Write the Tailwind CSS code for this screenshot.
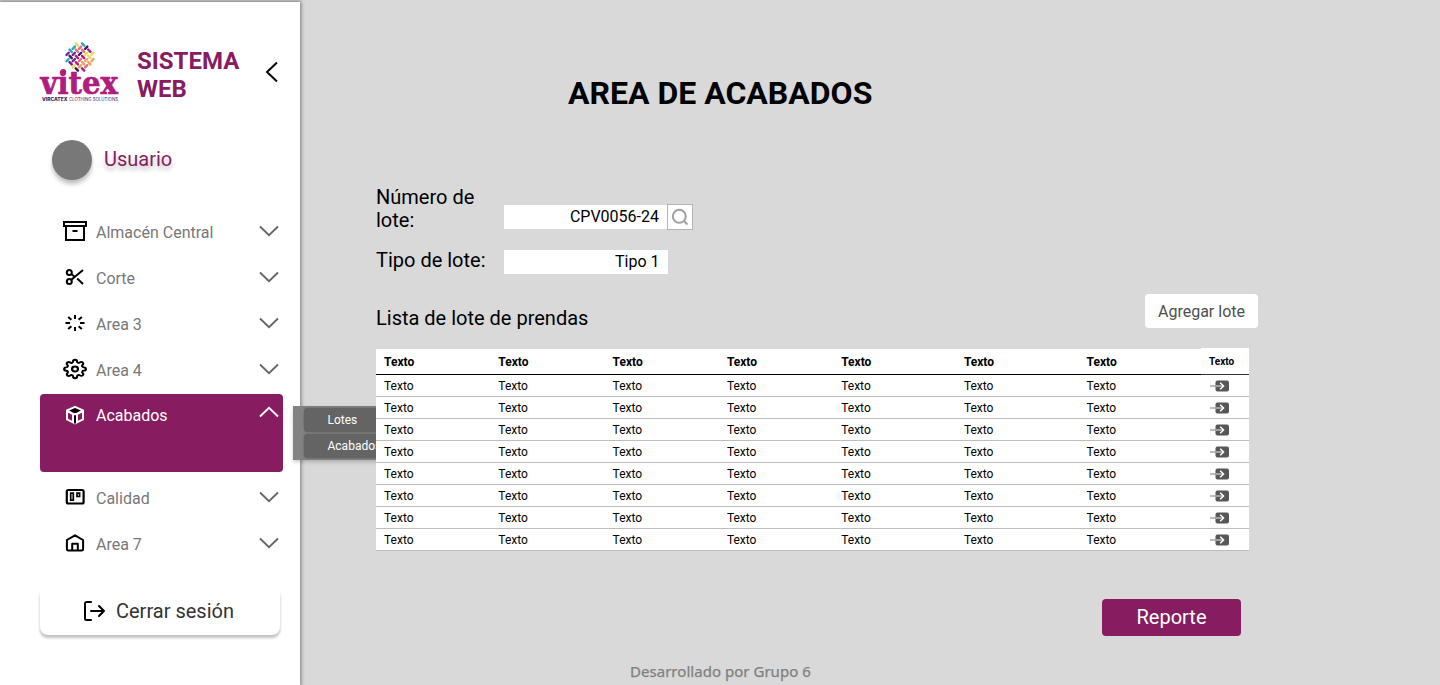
<!DOCTYPE html>
<html lang="es">
<head>
<meta charset="utf-8">
<title>Area de Acabados</title>
<script src="https://cdn.jsdelivr.net/npm/@tailwindcss/browser@4"></script>
</head>
<body class="bg-[#d9d9d9] font-['Roboto',sans-serif] text-black">
<svg class="hidden">
  <symbol id="down" viewBox="0 0 20 12"><path d="M1 1.500l9 8.600 9-8.600" fill="none" stroke="currentColor" stroke-width="1.900"/></symbol>
  <symbol id="enter" viewBox="0 0 20 12"><rect x="5.500" y=".5" width="13.500" height="11" rx="2" fill="#575757"/><path d="M0 6h6" stroke="#999" stroke-width="1.300"/><path d="M6 6h7" stroke="#ccc" stroke-width="1.300"/><path d="M10.200 2.800L13.500 6l-3.300 3.200" fill="none" stroke="#fff" stroke-width="1.500"/></symbol>
</svg>
<div class="relative flex h-[685px] w-[1440px] overflow-hidden">
  <aside class="mt-[2px] flex h-[683px] w-[300px] shrink-0 flex-col bg-white pl-10 shadow-[0_0_4px_1px_rgba(0,0,0,0.45)]">
    <div class="flex h-[106px] items-start pt-[38px]">
      <svg class="h-[64px] w-[80px] overflow-visible" viewBox="0 0 80 64">
        <g id="weave" transform="translate(40 17) rotate(45)" fill="none" stroke-width="2.400" stroke-linecap="round"></g>
        <text x="0.500" y="53.700" textLength="77.300" lengthAdjust="spacingAndGlyphs" font-family="DejaVu Serif" font-weight="700" font-size="32" fill="#b01c80" stroke="#b01c80" stroke-width=".7">vitex</text>
        <circle cx="23.300" cy="32" r="2.900" fill="#b01c80"/>
        <text x="2" y="60.700" textLength="25.500" lengthAdjust="spacingAndGlyphs" font-family="Inter" font-weight="800" font-size="4.400" fill="#3b1a5a">VIRCATEX</text>
        <text x="29" y="60.700" textLength="49" lengthAdjust="spacingAndGlyphs" font-family="Inter" font-size="4.400" fill="#3b1a5a">CLOTHING SOLUTIONS</text>
      </svg>
      <h2 class="ml-[17px] mt-[7px] w-[110px] text-2xl leading-7 font-bold text-[#871c61]">SISTEMA WEB</h2>
      <svg class="ml-[18px] mt-[21px] h-[22px] w-[14px]" viewBox="0 0 14 22"><path d="M12 1.500L2 11l10 9.500" fill="none" stroke="#000" stroke-width="2"/></svg>
    </div>
    <div class="mt-[31.500px] flex h-10 items-center pl-3">
      <div class="size-10 rounded-full bg-[#787878] shadow-[0_4px_4px_rgba(0,0,0,0.25)]"></div>
      <span class="-mt-[2px] ml-3 text-xl text-[#871c61] [text-shadow:0_4px_4px_rgba(0,0,0,0.25)]">Usuario</span>
    </div>
    <nav class="mt-[28.500px] flex w-[243px] flex-col text-base text-[#787878]">
      <a class="flex h-[46px] items-center pl-[23px] pr-1"><svg class="size-6 text-black" viewBox="0 0 24 24" fill="none" stroke="currentColor" stroke-width="2"><path d="M1 3h22v4H1zM3 7V21h18V7M9.500 12h5"/></svg><span class="ml-[9px] mt-[3px] grow">Almacén Central</span><svg class="h-3 w-5 text-[#666]"><use href="#down"/></svg></a>
      <a class="flex h-[46px] items-center pl-[23px] pr-1"><svg class="size-6 text-black" viewBox="0 0 24 24" fill="none" stroke="currentColor" stroke-width="2"><circle cx="6.300" cy="7.400" r="2.500"/><circle cx="6.300" cy="16.500" r="2.500"/><path d="M20 5L8.300 14.800M14.200 13.500l5.800 5.500M8.300 9L12 12"/></svg><span class="ml-[9px] mt-[3px] grow">Corte</span><svg class="h-3 w-5 text-[#666]"><use href="#down"/></svg></a>
      <a class="flex h-[46px] items-center pl-[23px] pr-1"><svg class="size-6 text-black" viewBox="0 0 24 24" fill="none" stroke="currentColor" stroke-width="2"><path d="M12 4v4M12 16v4M2.500 12H7M17 12h4.500M5.200 6l3.200 2.800M15.600 15.200l3.200 2.800M5.200 18l3.200-2.800M15.600 8.800l3.200-2.800"/></svg><span class="ml-[9px] mt-[3px] grow">Area 3</span><svg class="h-3 w-5 text-[#666]"><use href="#down"/></svg></a>
      <a class="flex h-[46px] items-center pl-[23px] pr-1"><svg class="size-6 text-black" viewBox="0 0 24 24" fill="none" stroke="currentColor" stroke-width="2.200" stroke-linejoin="round"><g transform="translate(.2 1.900) scale(.985 .84)"><circle cx="12" cy="12" r="3"/><path d="M19.400 15a1.650 1.650 0 0 0 .33 1.820l.06.06a2 2 0 0 1 0 2.830 2 2 0 0 1-2.830 0l-.06-.06a1.650 1.650 0 0 0-1.820-.33 1.650 1.650 0 0 0-1 1.510V21a2 2 0 0 1-4 0v-.09A1.650 1.650 0 0 0 9 19.400a1.650 1.650 0 0 0-1.820.33l-.06.06a2 2 0 0 1-2.830 0 2 2 0 0 1 0-2.830l.06-.06a1.650 1.650 0 0 0 .33-1.820 1.650 1.650 0 0 0-1.510-1H3a2 2 0 0 1 0-4h.09A1.650 1.650 0 0 0 4.600 9a1.650 1.650 0 0 0-.33-1.820l-.06-.06a2 2 0 0 1 0-2.830 2 2 0 0 1 2.830 0l.06.06a1.650 1.650 0 0 0 1.820.33H9a1.650 1.650 0 0 0 1-1.510V3a2 2 0 0 1 4 0v.09a1.650 1.650 0 0 0 1 1.510 1.650 1.650 0 0 0 1.820-.33l.06-.06a2 2 0 0 1 2.830 0 2 2 0 0 1 0 2.830l-.06.06a1.650 1.650 0 0 0-.33 1.820V9a1.650 1.650 0 0 0 1.510 1H21a2 2 0 0 1 0 4h-.09a1.650 1.650 0 0 0-1.510 1z"/></g></svg><span class="ml-[9px] mt-[3px] grow">Area 4</span><svg class="h-3 w-5 text-[#666]"><use href="#down"/></svg></a>
      <a class="mt-[2px] flex h-[78px] items-start rounded bg-[#871c61] pl-[23px] pr-1 text-white"><svg class="mt-[9px] size-6" viewBox="0 0 24 24" fill="none" stroke="#fff" stroke-width="2" stroke-linejoin="round"><path d="M12 5.500l5 2-5 2-5-2z" fill="#000" stroke="#000" stroke-width="1"/><path d="M12 3.800l8 3.600v9l-8 4-8-4v-9zM4.500 8l5.500 3v8.500M19.500 8L14 11v8.500M10 11h4"/><path d="M12 13v7.500" stroke="#000"/></svg><span class="ml-[9px] mt-[10px] grow">Acabados</span><svg class="mt-3 h-3 w-5 rotate-180"><use href="#down"/></svg></a>
      <a class="mt-[2px] flex h-[46px] items-center pl-[23px] pr-1"><svg class="size-6 text-black" viewBox="0 0 24 24" fill="none" stroke="currentColor" stroke-width="2"><rect x="3.800" y="5" width="16.800" height="13.500" rx="1.500" stroke-width="2.200"/><path d="M7.700 8.200h2.600v7H7.700zM14 8.200h2.600v3.300H14z" stroke-width="1.700"/></svg><span class="ml-[9px] mt-[3px] grow">Calidad</span><svg class="h-3 w-5 text-[#666]"><use href="#down"/></svg></a>
      <a class="flex h-[46px] items-center pl-[23px] pr-1"><svg class="size-6 text-black" viewBox="0 0 24 24" fill="none" stroke="currentColor" stroke-width="2" stroke-linejoin="round"><path d="M3.900 9L12 4.300 20.100 9v9a1.300 1.300 0 0 1-1.300 1.500H5.200A1.300 1.300 0 0 1 3.900 18zM9.200 19.500v-6.700h5.600v6.700"/></svg><span class="ml-[9px] mt-[3px] grow">Area 7</span><svg class="h-3 w-5 text-[#666]"><use href="#down"/></svg></a>
    </nav>
    <button class="mt-[21px] flex h-12 w-60 items-center rounded-lg bg-white pl-[42px] text-xl text-[#333] shadow-[0_3px_3px_rgba(0,0,0,0.25)]">
      <svg class="h-6 w-6" viewBox="0 0 24 24" fill="none" stroke="#000" stroke-width="2" stroke-linecap="round" stroke-linejoin="round"><path d="M9 3H4.500A1.500 1.500 0 0 0 3 4.500v15A1.500 1.500 0 0 0 4.500 21H9M9 12h13M17 7l5 5-5 5"/></svg>
      <span class="ml-[10px]">Cerrar sesión</span>
    </button>
  </aside>

  <div class="absolute left-[293px] top-[406px] flex h-[54px] w-[120px] flex-col gap-[2px] bg-[#828282] py-[2px] pl-[10.500px] text-xs text-white shadow-[0_2px_4px_rgba(0,0,0,0.2)]">
    <div class="flex h-6 items-center rounded-sm bg-[#646464] pl-6 shadow-[0_0_2px_rgba(0,0,0,0.3)]">Lotes</div>
    <div class="flex h-6 items-center rounded-sm bg-[#646464] pl-6 shadow-[0_0_2px_rgba(0,0,0,0.3)]">Acabados</div>
  </div>

  <main class="relative flex w-[1140px] flex-col pl-[76px]">
    <h1 class="mt-[74px] pl-[192px] text-[32px] leading-[38px] font-bold">AREA DE ACABADOS</h1>
    <div class="mt-[74px] flex h-[46px]">
      <label class="w-[128px] pr-4 text-xl leading-[23px]">Número de lote:</label>
      <div class="mt-[19px] h-6 w-[164px] bg-white pr-[9px] text-right text-base leading-6">CPV0056-24</div>
      <button class="-ml-px mt-[18px] flex h-[26px] w-[26px] items-center justify-center border border-[#b3b3b3] bg-white"><svg class="size-[18px]" viewBox="0 0 18 18" fill="none" stroke="#a0a0a0" stroke-width="2"><circle cx="8.300" cy="8.300" r="6.500"/><path d="M13 13l3.500 3.500"/></svg></button>
    </div>
    <div class="mt-[18px] flex h-6">
      <label class="w-[128px] text-xl leading-[21px]">Tipo de lote:</label>
      <div class="h-6 w-[164px] bg-white pr-[8.500px] text-right text-base leading-6">Tipo 1</div>
    </div>
    <div class="mt-5 flex h-[34px] w-[882px] justify-between">
      <h3 class="mt-3 text-xl leading-6">Lista de lote de prendas</h3>
      <button class="h-[34px] w-[113px] rounded bg-white pt-px text-base text-[#4f4f4f]">Agregar lote</button>
    </div>
    <div class="mt-5 flex w-[873px] text-xs">
      <div class="mt-px w-[825px]" id="rows">
        <div class="grid h-[26px] grid-cols-[114.300px_114.300px_114.300px_114.300px_122.700px_122.700px_122.400px] items-center border-b border-black bg-white pl-2 font-bold"><span>Texto</span><span>Texto</span><span>Texto</span><span>Texto</span><span>Texto</span><span>Texto</span><span>Texto</span></div>
      </div>
      <div class="w-12" id="actions">
        <div class="flex h-[27px] items-center border-b border-[#333] bg-white pl-2 pt-px text-[10px] font-bold">Texto</div>
      </div>
    </div>
    <button class="ml-[726px] mt-12 h-[37px] w-[139px] rounded bg-[#871c61] pb-px text-xl text-white">Reporte</button>
    <footer class="ml-[254px] mt-[24px] whitespace-nowrap font-['Noto_Sans',sans-serif] text-[15px] leading-[22px] tracking-[0.030px] text-[#808080] [-webkit-text-stroke:0.250px_#808080]">Desarrollado por Grupo 6</footer>
  </main>
</div>
<template id="row"><div class="grid h-[22px] grid-cols-[114.300px_114.300px_114.300px_114.300px_122.700px_122.700px_122.400px] items-center border-b border-[#bdbdbd] bg-white pl-2"><span>Texto</span><span>Texto</span><span>Texto</span><span>Texto</span><span>Texto</span><span>Texto</span><span>Texto</span></div></template>
<template id="action"><div class="flex h-[22px] items-center border-b border-[#bdbdbd] bg-white pl-[9px]"><svg class="h-3 w-5"><use href="#enter"/></svg></div></template>
<script>
  for (let i = 0; i < 8; i++) {
    document.getElementById('rows').append(document.getElementById('row').content.cloneNode(true));
    document.getElementById('actions').append(document.getElementById('action').content.cloneNode(true));
  }

  // Woven threads of the logo: neighbouring threads cross at right angles.
  const thread = { T: '#2ba3bd', D: '#3c1a5c', M: '#b01c80', Y: '#ead95a', O: '#e9a25e', S: '#d9747c', P: '#71208a' };
  const weave = document.getElementById('weave');
  ['_TDMY_', 'YSSYYO', 'TSDMOO', 'TPMSOS', 'PDPMOM', '_TPYD_'].forEach((line, j) => {
    [...line].forEach((key, i) => {
      if (!thread[key]) return;
      const x = (i - 2.5) * 4.4, y = (j - 2.5) * 4.4;
      const path = document.createElementNS('http://www.w3.org/2000/svg', 'path');
      path.setAttribute('d', (i + j) % 2 ? `M${x - 1.6} ${y}h3.2` : `M${x} ${y - 1.6}v3.2`);
      path.setAttribute('stroke', thread[key]);
      weave.append(path);
    });
  });
</script>
</body>
</html>
